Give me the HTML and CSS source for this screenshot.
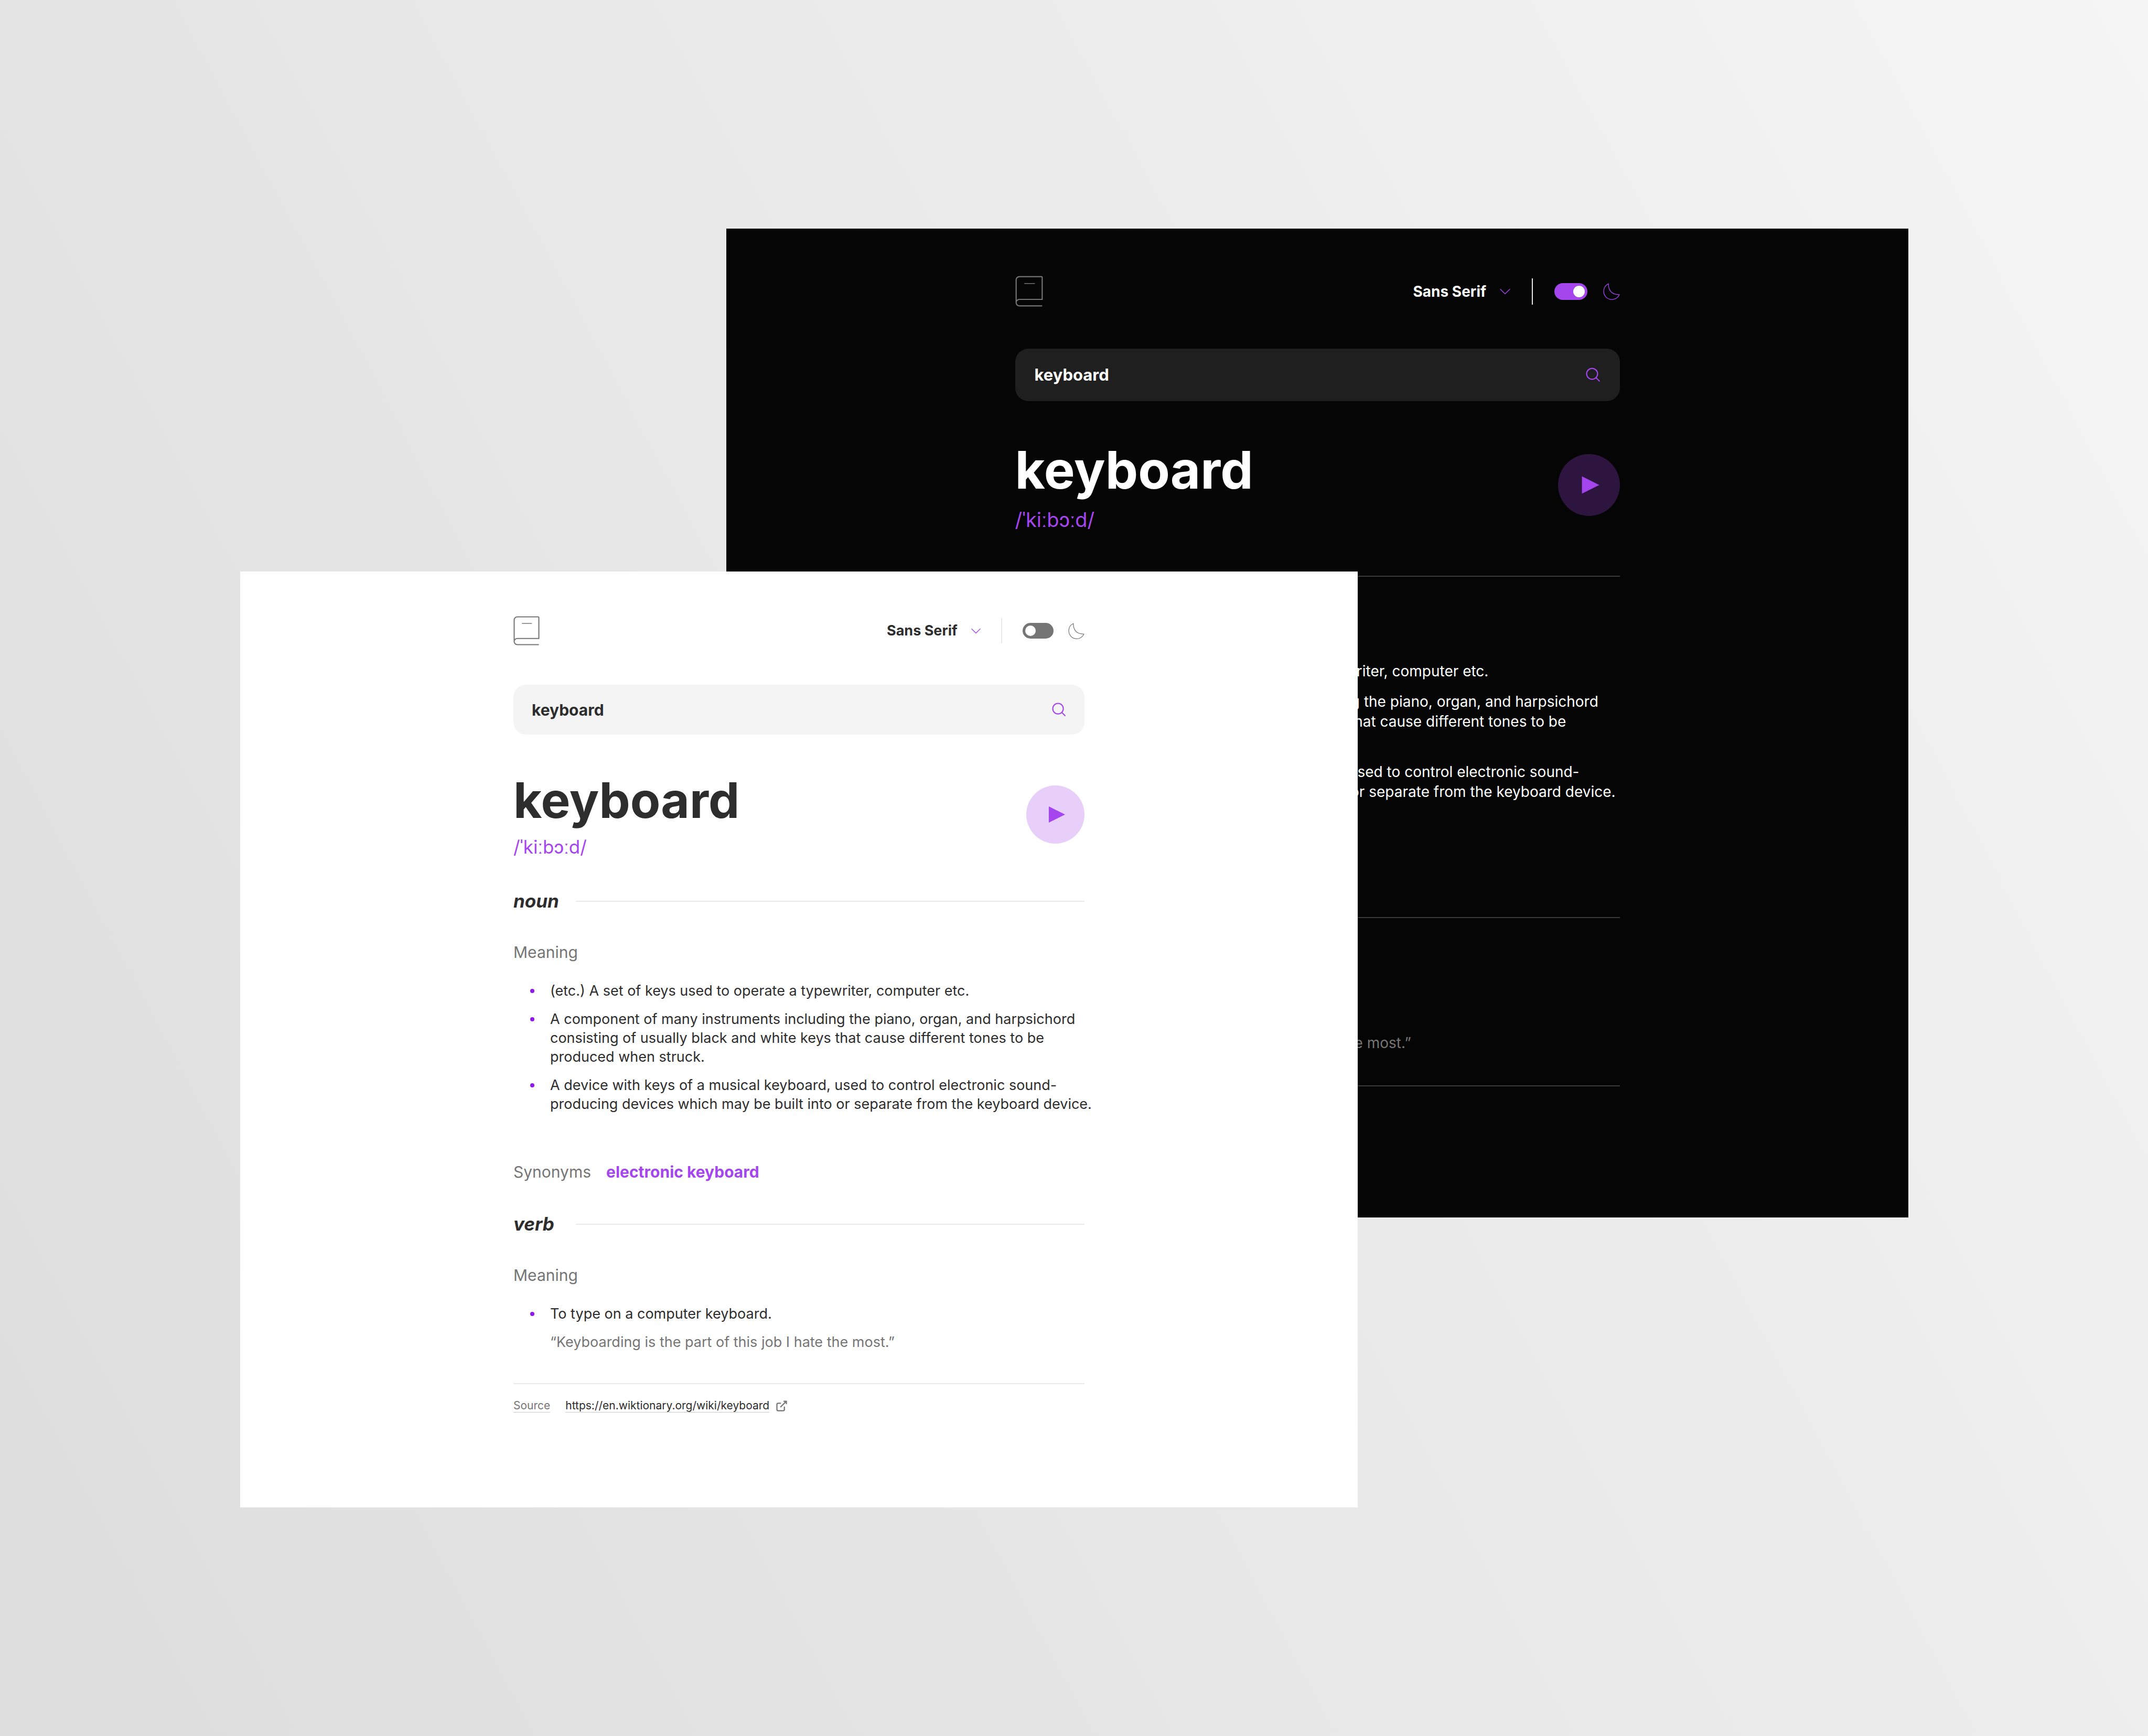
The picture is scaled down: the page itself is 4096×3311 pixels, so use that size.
FILE: index.html
```html
<!DOCTYPE html>
<html lang="en">
<head>
  <meta charset="utf-8">
  <meta name="viewport" content="width=device-width, initial-scale=1">
  <title>Dictionary</title>
  <link rel="stylesheet" href="styles.css">
</head>
<body class="stage">
  <svg class="sprite" aria-hidden="true">
    <symbol id="icon-book" viewBox="0 0 34 38">
      <path d="M1 33V5a4 4 0 0 1 4-4h27a1 1 0 0 1 1 1v27H5a4 4 0 0 0 0 8h28" fill="none" stroke="currentColor" stroke-width="1.4"/>
      <path d="M11 9.5h13" fill="none" stroke="currentColor"/>
    </symbol>
    <symbol id="icon-chevron" viewBox="0 0 12 7">
      <path d="M.4.6 6 6.2 11.6.6" fill="none" stroke="currentColor" stroke-width=".9"/>
    </symbol>
    <symbol id="icon-moon" viewBox="0 0 22 22">
      <path d="M.7 10.4a10.7 10.7 0 0 0 20.5 4.7C11.5 15.1 6.9 10.4 6.9.9A10.7 10.7 0 0 0 .7 10.4Z" fill="none" stroke="currentColor" stroke-width=".9"/>
    </symbol>
    <symbol id="icon-search" viewBox="0 0 18 18">
      <path d="m12.7 12.7 3.9 3.9M1 7.700a6.700 6.700 0 1 0 13.400 0 6.700 6.700 0 0 0-13.400 0Z" fill="none" stroke="currentColor" stroke-width="1.4" stroke-linecap="round"/>
    </symbol>
    <symbol id="icon-play" viewBox="0 0 75 75">
      <path d="M29 27v21l21-10.5z" fill="currentColor"/>
    </symbol>
    <symbol id="icon-external" viewBox="0 0 14 14">
      <path d="M6.1 3.5H2.500A1.500 1.500 0 0 0 1 5v6.500A1.500 1.500 0 0 0 2.500 13H9a1.500 1.500 0 0 0 1.500-1.500V7.900M5.400 8.600 13 1M9.400 1H13v3.600" fill="none" stroke="currentColor" stroke-width="1.5"/>
    </symbol>
  </svg>

  <main class="panel panel-dark">
    <div class="content">
      <header class="top">
        <svg class="book" aria-hidden="true"><use href="#icon-book"/></svg>
        <div class="controls">
          <div class="font-picker">
            <select class="font-select" aria-label="Font"><option>Sans Serif</option></select>
            <svg class="chevron" aria-hidden="true"><use href="#icon-chevron"/></svg>
          </div>
          <span class="divider"></span>
          <label class="theme">
            <input class="toggle" type="checkbox" aria-label="Dark theme" checked>
            <svg class="moon" aria-hidden="true"><use href="#icon-moon"/></svg>
          </label>
        </div>
      </header>
      <form class="search">
        <input class="search-input" type="text" aria-label="Search for a word" value="keyboard">
        <button class="search-button" type="button" aria-label="Search"><svg aria-hidden="true"><use href="#icon-search"/></svg></button>
      </form>
      <section class="word">
        <div class="word-text">
          <h1 class="word-title">keyboard</h1>
          <p class="phonetic">/ˈkiːbɔːd/</p>
        </div>
        <button class="play" type="button" aria-label="Play pronunciation"><svg aria-hidden="true"><use href="#icon-play"/></svg></button>
      </section>
      <section class="part">
        <h2 class="part-name">noun</h2>
        <h3 class="label">Meaning</h3>
        <ul class="meanings">
          <li class="meaning"><p>(etc.) A set of keys used to operate a typewriter, computer etc.</p></li>
          <li class="meaning"><p>A component of many instruments including the piano, organ, and harpsichord consisting of usually black and white keys that cause different tones to be produced when struck.</p></li>
          <li class="meaning"><p>A device with keys of a musical keyboard, used to control electronic sound-producing devices which may be built into or separate from the keyboard device.</p></li>
        </ul>
        <div class="synonyms">
          <h3 class="label">Synonyms</h3>
          <a class="synonym" href="#electronic-keyboard">electronic keyboard</a>
        </div>
      </section>
      <section class="part">
        <h2 class="part-name">verb</h2>
        <h3 class="label">Meaning</h3>
        <ul class="meanings">
          <li class="meaning"><p>To type on a computer keyboard.</p><p class="quote">“Keyboarding is the part of this job I hate the most.”</p></li>
        </ul>
      </section>
      <footer class="source"></footer>
    </div>
  </main>

  <section class="panel panel-light">
    <div class="content">
      <header class="top">
        <svg class="book" aria-hidden="true"><use href="#icon-book"/></svg>
        <div class="controls">
          <div class="font-picker">
            <select class="font-select" aria-label="Font"><option>Sans Serif</option></select>
            <svg class="chevron" aria-hidden="true"><use href="#icon-chevron"/></svg>
          </div>
          <span class="divider"></span>
          <label class="theme">
            <input class="toggle" type="checkbox" aria-label="Dark theme">
            <svg class="moon" aria-hidden="true"><use href="#icon-moon"/></svg>
          </label>
        </div>
      </header>
      <form class="search">
        <input class="search-input" type="text" aria-label="Search for a word" value="keyboard">
        <button class="search-button" type="button" aria-label="Search"><svg aria-hidden="true"><use href="#icon-search"/></svg></button>
      </form>
      <section class="word">
        <div class="word-text">
          <h1 class="word-title">keyboard</h1>
          <p class="phonetic">/ˈkiːbɔːd/</p>
        </div>
        <button class="play" type="button" aria-label="Play pronunciation"><svg aria-hidden="true"><use href="#icon-play"/></svg></button>
      </section>
      <section class="part">
        <h2 class="part-name">noun</h2>
        <h3 class="label">Meaning</h3>
        <ul class="meanings">
          <li class="meaning"><p>(etc.) A set of keys used to operate a typewriter, computer etc.</p></li>
          <li class="meaning"><p>A component of many instruments including the piano, organ, and harpsichord consisting of usually black and white keys that cause different tones to be produced when struck.</p></li>
          <li class="meaning"><p>A device with keys of a musical keyboard, used to control electronic sound-producing devices which may be built into or separate from the keyboard device.</p></li>
        </ul>
        <div class="synonyms">
          <h3 class="label">Synonyms</h3>
          <a class="synonym" href="#electronic-keyboard">electronic keyboard</a>
        </div>
      </section>
      <section class="part">
        <h2 class="part-name">verb</h2>
        <h3 class="label">Meaning</h3>
        <ul class="meanings">
          <li class="meaning"><p>To type on a computer keyboard.</p><p class="quote">“Keyboarding is the part of this job I hate the most.”</p></li>
        </ul>
      </section>
      <footer class="source">
        <span class="source-label">Source</span>
        <a class="source-link" href="https://en.wiktionary.org/wiki/keyboard"><span class="source-url">https://en.wiktionary.org/wiki/keyboard</span><svg class="external" aria-hidden="true"><use href="#icon-external"/></svg></a>
      </footer>
    </div>
  </section>
</body>
</html>
```
FILE: styles.css
```css
*,
*::before,
*::after {
  box-sizing: border-box;
}

h1, h2, h3, p, ul {
  margin: 0;
  padding: 0;
  font: inherit;
}

svg {
  display: block;
}

input,
select,
button {
  margin: 0;
  padding: 0;
  border: 0;
  background: none;
  color: inherit;
  font: inherit;
  appearance: none;
}

/* Two windows overlap on one grid: dark behind, light in front. */
.stage {
  display: grid;
  grid-template-columns: 458fr 927fr 1204fr 1050fr 457fr;
  grid-template-rows: 436fr 654fr 1232fr 553fr 436fr;
  min-height: 100vh;
  margin: 0;
  background: linear-gradient(62deg, #dddddd, #f5f5f5);
  font-family: Inter, "Liberation Sans", sans-serif;
  font-optical-sizing: none;
}

.sprite {
  position: absolute;
  width: 0;
  height: 0;
}

.panel {
  background: var(--page);
  color: var(--ink);
  font-size: var(--fs-body);
  line-height: var(--lh-body);
}

.panel-dark {
  grid-area: 2 / 3 / 4 / 5;
  --page: #050505;
  --ink: #ffffff;
  --field: #1f1f1f;
  --rule: #3a3a3a;
  --divider: #e9e9e9;
  --track: #a445ed;
  --moon: #a445ed;
  --content: 1153px;
  --fs-title: 99px;
  --lh-title: 121px;
  --fs-large: 38px;
  --lh-large: 46px;
  --fs-label: 31px;
  --fs-body: 28px;
  --lh-body: 38px;
  --fs-small: 22px;
  --pad-top: 90px;
  --book-w: 53px;
  --book-h: 59px;
  --gap-search: 80px;
  --search-h: 100px;
  --radius: 25px;
  --pad-search: 37px;
  --search-icon: 28px;
  --gap-word: 71px;
  --gap-phonetic: 11px;
  --play: 118px;
  --gap-section: 62px;
  --gap-label: 61px;
  --gap-list: 40px;
  --gap-item: 20px;
  --gap-synonyms: 98px;
  --name-col: 126px;
  --bullet: 8px;
  --bullet-left: 34px;
  --bullet-gap: 32px;
  --bullet-top: 15px;
  --gap-inline: 34px;
  --gap-source: 30px;
  --gap-control: 41px;
  --gap-picker: 25px;
  --gap-theme: 30px;
  --chevron-w: 20px;
  --chevron-h: 12px;
  --divider-h: 50px;
  --toggle-w: 63px;
  --toggle-h: 32px;
  --knob: 22px;
  --moon-size: 32px;
  --external: 22px;
}

.panel-light {
  grid-area: 3 / 2 / 5 / 4;
  --page: #ffffff;
  --ink: #2d2d2d;
  --field: #f4f4f4;
  --rule: #e9e9e9;
  --divider: #e9e9e9;
  --track: #757575;
  --moon: #757575;
  --content: 1089px;
  --fs-title: 94px;
  --lh-title: 115px;
  --fs-large: 35px;
  --lh-large: 43px;
  --fs-label: 30px;
  --fs-body: 27px;
  --lh-body: 36px;
  --fs-small: 21px;
  --pad-top: 85px;
  --book-w: 50px;
  --book-h: 56px;
  --gap-search: 75px;
  --search-h: 95px;
  --radius: 24px;
  --pad-search: 35px;
  --search-icon: 27px;
  --gap-word: 68px;
  --gap-phonetic: 10px;
  --play: 111px;
  --gap-section: 60px;
  --gap-label: 58px;
  --gap-list: 38px;
  --gap-item: 18px;
  --gap-synonyms: 93px;
  --name-col: 119px;
  --bullet: 8px;
  --bullet-left: 32px;
  --bullet-gap: 30px;
  --bullet-top: 14px;
  --gap-inline: 29px;
  --gap-source: 28px;
  --gap-control: 39px;
  --gap-picker: 26px;
  --gap-theme: 28px;
  --chevron-w: 18px;
  --chevron-h: 11px;
  --divider-h: 48px;
  --toggle-w: 59px;
  --toggle-h: 30px;
  --knob: 20px;
  --moon-size: 31px;
  --external: 21px;
}

.content {
  width: var(--content);
  max-width: 100%;
  margin: 0 auto;
  padding-top: var(--pad-top);
}

.top {
  display: flex;
  align-items: center;
  justify-content: space-between;
  margin-bottom: var(--gap-search);
}

.book {
  width: var(--book-w);
  height: var(--book-h);
  color: #757575;
}

.controls {
  display: flex;
  align-items: center;
  gap: var(--gap-control);
}

.font-picker,
.theme {
  display: flex;
  align-items: center;
}

.font-picker {
  gap: var(--gap-picker);
}

.theme {
  gap: var(--gap-theme);
}

.font-select {
  font-weight: 700;
}

.chevron {
  width: var(--chevron-w);
  height: var(--chevron-h);
  color: #a445ed;
}

.divider {
  width: 2px;
  height: var(--divider-h);
  background: var(--divider);
}

.toggle {
  display: flex;
  align-items: center;
  width: var(--toggle-w);
  height: var(--toggle-h);
  padding: 0 5px;
  border-radius: var(--toggle-h);
  background: var(--track);
}

.toggle::before {
  content: "";
  width: var(--knob);
  height: var(--knob);
  border-radius: 50%;
  background: #ffffff;
}

.toggle:checked {
  justify-content: flex-end;
}

.moon {
  width: var(--moon-size);
  height: var(--moon-size);
  color: var(--moon);
}

.search {
  display: flex;
  align-items: center;
  height: var(--search-h);
  margin-bottom: var(--gap-word);
  padding: 0 var(--pad-search);
  border-radius: var(--radius);
  background: var(--field);
}

.search-input {
  flex: 1;
  min-width: 0;
  font-size: var(--fs-label);
  font-weight: 700;
}

.search-button svg {
  width: var(--search-icon);
  height: var(--search-icon);
  color: #a445ed;
}

.word {
  display: flex;
  align-items: center;
  justify-content: space-between;
}

.word-title {
  margin-bottom: var(--gap-phonetic);
  font-size: var(--fs-title);
  font-weight: 700;
  line-height: var(--lh-title);
}

.phonetic {
  color: #a445ed;
  font-size: var(--fs-large);
  line-height: var(--lh-large);
}

.play {
  width: var(--play);
  height: var(--play);
  border-radius: 50%;
  background: rgb(164 69 237 / 26%);
  color: #a445ed;
}

.play svg {
  width: 100%;
  height: 100%;
}

.part {
  margin-top: var(--gap-section);
}

.part-name {
  display: grid;
  grid-template-columns: var(--name-col) 1fr;
  align-items: center;
  margin-bottom: var(--gap-label);
  font-size: var(--fs-large);
  font-style: italic;
  font-weight: 700;
  line-height: var(--lh-large);
}

.part-name::after {
  content: "";
  height: 2px;
  background: var(--rule);
}

.label {
  color: #757575;
  font-size: var(--fs-label);
}

/* Long definitions may run slightly past the content edge before wrapping. */
.meanings {
  display: grid;
  gap: var(--gap-item);
  margin-top: var(--gap-list);
  margin-right: -20px;
  list-style: none;
}

.meaning {
  display: grid;
  grid-template-columns: var(--bullet) 1fr;
  gap: var(--gap-item) var(--bullet-gap);
  padding-left: var(--bullet-left);
}

.meaning::before {
  content: "";
  width: var(--bullet);
  height: var(--bullet);
  margin-top: var(--bullet-top);
  border-radius: 50%;
  background: #8f19e8;
}

.quote {
  grid-column: 2;
  color: #757575;
}

.synonyms {
  display: flex;
  gap: var(--gap-inline);
  margin-top: var(--gap-synonyms);
}

.synonym {
  color: #a445ed;
  font-size: var(--fs-label);
  font-weight: 700;
  text-decoration: none;
}

.source {
  display: flex;
  gap: var(--gap-inline);
  margin-top: var(--gap-section);
  padding-top: var(--gap-source);
  border-top: 2px solid var(--rule);
  font-size: var(--fs-small);
  line-height: 25px;
}

.source-label,
.source-url {
  border-bottom: 1px solid #c8c8c8;
}

.source-label {
  color: #757575;
}

.source-link {
  display: flex;
  align-items: center;
  gap: 13px;
  color: inherit;
  text-decoration: none;
}

.external {
  width: var(--external);
  height: var(--external);
  color: #757575;
}
```
